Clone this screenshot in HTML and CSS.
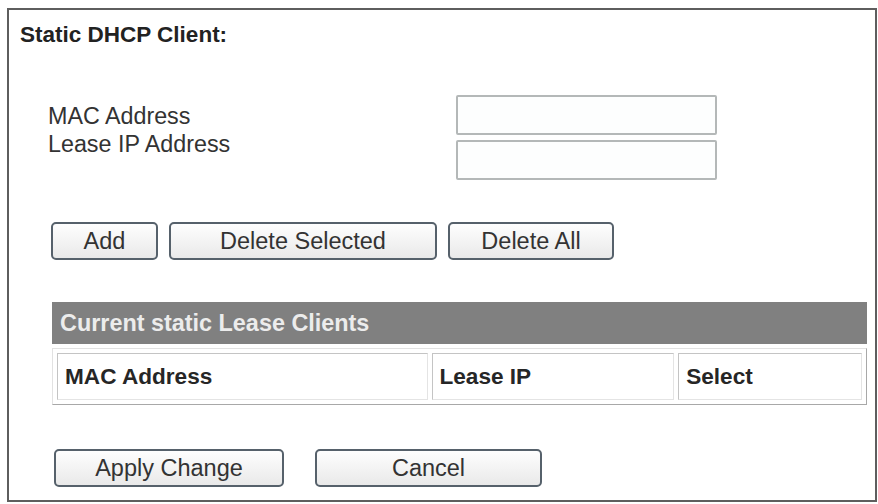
FILE: index.html
```html
<!DOCTYPE html>
<html>
<head>
    <title>Static DHCP Client</title>
    <link rel="stylesheet" href="styles.css">
</head>
<body>
    <div class="panel">
        <div class="title">Static DHCP Client:</div>

        <div class="entry">
            <div class="labels">
                <div>MAC Address</div>
                <div>Lease IP Address</div>
            </div>
            <div class="fields">
                <input type="text" class="field" id="mac">
                <input type="text" class="field" id="ip">
            </div>
        </div>

        <div class="actions">
            <button class="btn btn-add">Add</button>
            <button class="btn btn-del-sel">Delete Selected</button>
            <button class="btn btn-del-all">Delete All</button>
        </div>

        <div class="clients">
            <div class="clients-head">Current static Lease Clients</div>
            <table class="clients-table">
                <tr>
                    <th class="col-mac">MAC Address</th>
                    <th class="col-ip">Lease IP</th>
                    <th class="col-sel">Select</th>
                </tr>
            </table>
        </div>

        <div class="footer">
            <button class="btn btn-apply">Apply Change</button>
            <button class="btn btn-cancel">Cancel</button>
        </div>
    </div>
</body>
</html>
```

FILE: styles.css
```css
body {
    margin: 0;
    background: #fff;
    font-family: "Liberation Sans", Arial, sans-serif;
    color: #333;
}
.panel {
    box-sizing: border-box;
    margin: 8px 1px 0 7px;
    height: 494px;
    border: 2px solid #5e5e5e;
    padding: 12px 0 0 11px;
}
.title {
    font-size: 22.5px;
    font-weight: bold;
    line-height: 26px;
    color: #222;
}
.entry {
    display: grid;
    grid-template-columns: 408px 261px;
    margin: 47px 0 0 28px;
}
.labels {
    padding-top: 7px;
    font-size: 23.3px;
    line-height: 28px;
}
.fields {
    display: flex;
    flex-direction: column;
    gap: 5px;
}
.field {
    box-sizing: border-box;
    width: 261px;
    height: 40px;
    margin: 0;
    border: 2px solid #b4b8b8;
    border-radius: 2px;
    background: #fdfefe;
}
.btn {
    box-sizing: border-box;
    height: 38px;
    margin: 0;
    padding: 0;
    border: 2px solid #56616b;
    border-radius: 5px;
    background: linear-gradient(#fefefe, #e9e9e9);
    font-family: "Liberation Sans", Arial, sans-serif;
    font-size: 23.5px;
    color: #333;
    cursor: pointer;
}
.actions {
    display: flex;
    gap: 11px;
    margin: 42px 0 0 31px;
}
.btn-add { width: 107px; }
.btn-del-sel { width: 268px; }
.btn-del-all { width: 166px; }
.clients {
    width: 815px;
    margin: 42px 0 0 32px;
}
.clients-head {
    height: 42px;
    line-height: 42px;
    padding-left: 8px;
    background: #808080;
    color: #ececec;
    font-size: 23.4px;
    font-weight: bold;
}
.clients-table {
    width: 815px;
    margin-top: 4px;
    border: 1px solid;
    border-color: #e2e2e2 #a8a8a8 #a8a8a8 #e2e2e2;
    border-spacing: 4px;
}
.clients-table th {
    box-sizing: border-box;
    height: 47px;
    padding: 0 0 0 7px;
    border: 1px solid;
    border-color: #c4c4c4 #e4e4e4 #e4e4e4 #c4c4c4;
    text-align: left;
    font-size: 22.6px;
    color: #262626;
}
.col-mac { width: 371px; }
.col-ip { width: 243px; }
.col-sel { width: 184px; }
.footer {
    display: flex;
    gap: 31px;
    margin: 44px 0 0 34px;
}
.btn-apply { width: 230px; }
.btn-cancel { width: 227px; }
```
